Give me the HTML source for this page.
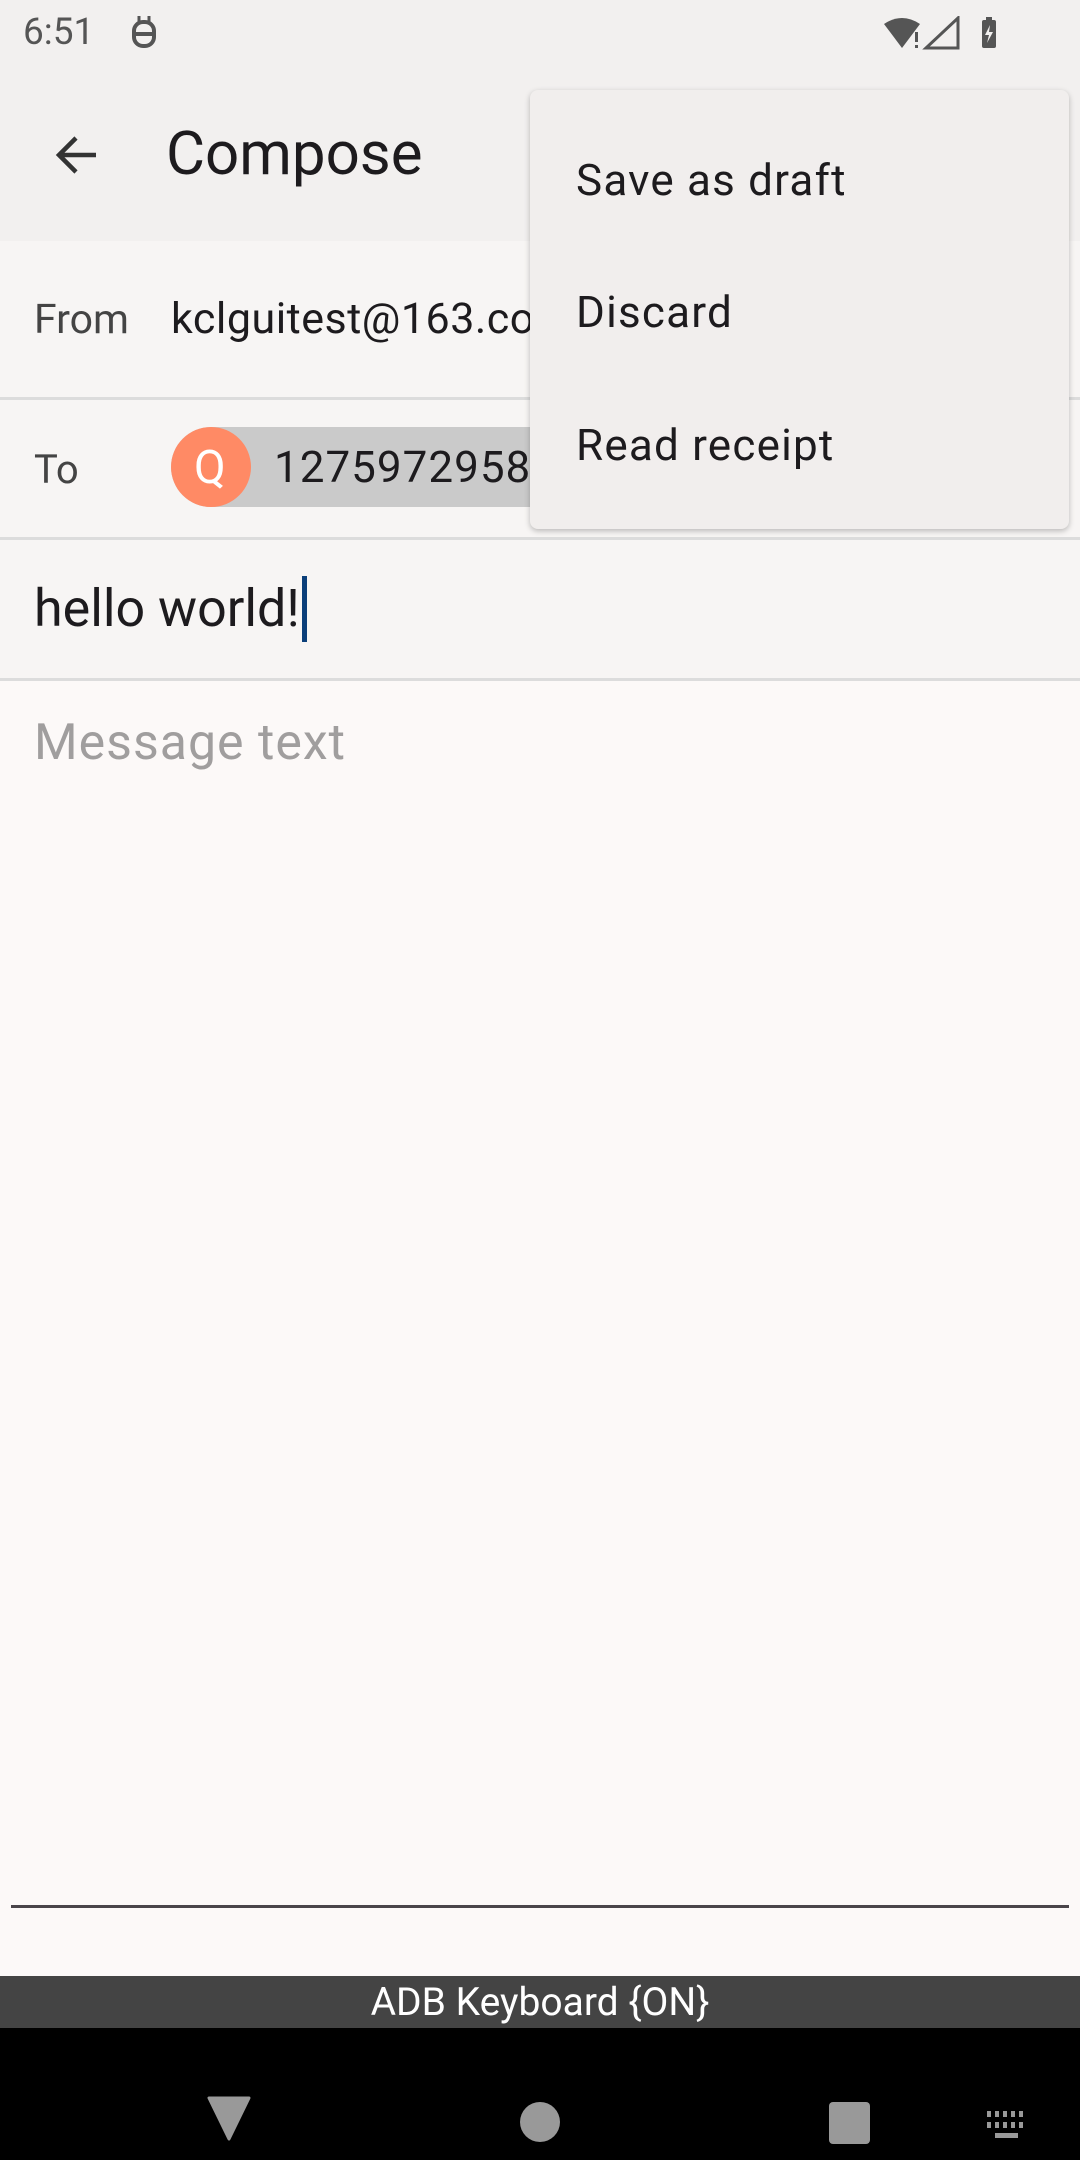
<!DOCTYPE html>
<html><head><meta charset="utf-8"><style>
*{margin:0;padding:0;box-sizing:border-box}
body{width:1080px;height:2160px;position:relative;overflow:hidden;background:#fcf9f8;font-family:"Roboto","Liberation Sans",sans-serif;}
.abs{position:absolute}
.t{position:absolute;white-space:nowrap;line-height:1}
</style></head><body>
<div class="abs" style="left:0;top:0;width:1080px;height:241px;background:#f2f0ef"></div>
<div class="t" style="left:23px;top:14px;font-size:37px;color:#555">6:51</div>
<svg class="abs" style="left:130px;top:14px" width="30" height="38" viewBox="0 0 30 38"><rect x="4" y="8" width="20" height="24" rx="9" fill="none" stroke="#555" stroke-width="4"/><line x1="4" y1="20" x2="24" y2="20" stroke="#555" stroke-width="4"/><line x1="9" y1="2" x2="9" y2="8" stroke="#555" stroke-width="3"/><line x1="19" y1="2" x2="19" y2="8" stroke="#555" stroke-width="3"/></svg>
<svg class="abs" style="left:882px;top:16px" width="130" height="36" viewBox="0 0 130 36"><path d="M2 8 Q20 -4 38 8 L20 32 Z" fill="#555"/><rect x="33" y="16" width="3" height="10" fill="#555"/><rect x="33" y="29" width="3" height="3" fill="#555"/><path d="M44 32 L76 32 L76 2 Z" fill="none" stroke="#555" stroke-width="3"/><rect x="100" y="4" width="14" height="28" rx="2" fill="#555"/><rect x="104" y="1" width="6" height="4" fill="#555"/><path d="M108 9 L103 19 L107 19 L105 27 L111 16 L107 16 Z" fill="#f2f0ef"/></svg>
<svg class="abs" style="left:52px;top:130px" width="50" height="50" viewBox="0 0 50 50"><path d="M44 25 H8 M24 8 L7 25 L24 42" fill="none" stroke="#333" stroke-width="4.5"/></svg>
<div class="t" style="left:166px;top:124px;font-size:60px;color:#1d1b1e">Compose</div>
<div class="abs" style="left:0;top:241px;width:1080px;height:438px;background:#f7f5f4"></div>
<div class="t" style="left:34px;top:300px;font-size:41px;color:#444">From</div>
<div class="t" style="left:171px;top:298px;font-size:43px;color:#1d1b1e;letter-spacing:.5px">kclguitest@163.com</div>
<div class="abs" style="left:0;top:397px;width:1080px;height:3px;background:#dcdcdc"></div>
<div class="t" style="left:34px;top:450px;font-size:40px;color:#444">To</div>
<div class="abs" style="left:171px;top:427px;width:400px;height:80px;border-radius:40px;background:#cacaca"></div>
<div class="abs" style="left:171px;top:427px;width:80px;height:80px;border-radius:40px;background:#ff8a65"></div>
<div class="t" style="left:194px;top:445px;font-size:46px;color:#fff">Q</div>
<div class="t" style="left:274px;top:445px;font-size:44px;color:#1d1b1e;letter-spacing:1px">12759729581@qq.com</div>
<div class="abs" style="left:0;top:537px;width:1080px;height:3px;background:#dcdcdc"></div>
<div class="t" style="left:34px;top:583px;font-size:52px;color:#1d1b1e">hello world!</div>
<div class="abs" style="left:302px;top:576px;width:5px;height:66px;background:#0b3f7a"></div>
<div class="abs" style="left:0;top:678px;width:1080px;height:3px;background:#dcdcdc"></div>
<div class="t" style="left:34px;top:718px;font-size:50px;color:#a09e9e;letter-spacing:1px">Message text</div>
<div class="abs" style="left:11px;top:1905px;width:1058px;height:3px;background:#4a454a"></div>
<div class="abs" style="left:530px;top:90px;width:539px;height:439px;background:#f1eeed;border-radius:8px;box-shadow:0 2px 6px rgba(0,0,0,.25)"></div>
<div class="t" style="left:576px;top:158px;font-size:44px;color:#1d1b1e;letter-spacing:1.2px">Save as draft</div>
<div class="t" style="left:576px;top:290px;font-size:44px;color:#1d1b1e;letter-spacing:1.2px">Discard</div>
<div class="t" style="left:576px;top:423px;font-size:44px;color:#1d1b1e;letter-spacing:1.2px">Read receipt</div>
<div class="abs" style="left:0;top:1976px;width:1080px;height:52px;background:#444"></div>
<div class="t" style="left:0;width:1080px;text-align:center;top:1983px;font-size:39px;color:#fff">ADB Keyboard {ON}</div>
<div class="abs" style="left:0;top:2028px;width:1080px;height:132px;background:#000"></div>
<svg class="abs" style="left:0;top:2028px" width="1080" height="132"><path d="M209 70 L249 70 L229 111 Z" fill="#999" stroke="#999" stroke-width="3" stroke-linejoin="round"/><circle cx="540" cy="94" r="20" fill="#999"/><rect x="829" y="74" width="41" height="42" rx="4" fill="#999"/><g fill="#999"><rect x="987" y="83" width="4" height="6"/><rect x="995" y="83" width="4" height="6"/><rect x="1003" y="83" width="4" height="6"/><rect x="1011" y="83" width="4" height="6"/><rect x="1019" y="83" width="4" height="6"/><rect x="987" y="94" width="4" height="6"/><rect x="995" y="94" width="4" height="6"/><rect x="1003" y="94" width="4" height="6"/><rect x="1011" y="94" width="4" height="6"/><rect x="1019" y="94" width="4" height="6"/><rect x="995" y="105" width="23" height="5"/></g></svg>
</body></html>
